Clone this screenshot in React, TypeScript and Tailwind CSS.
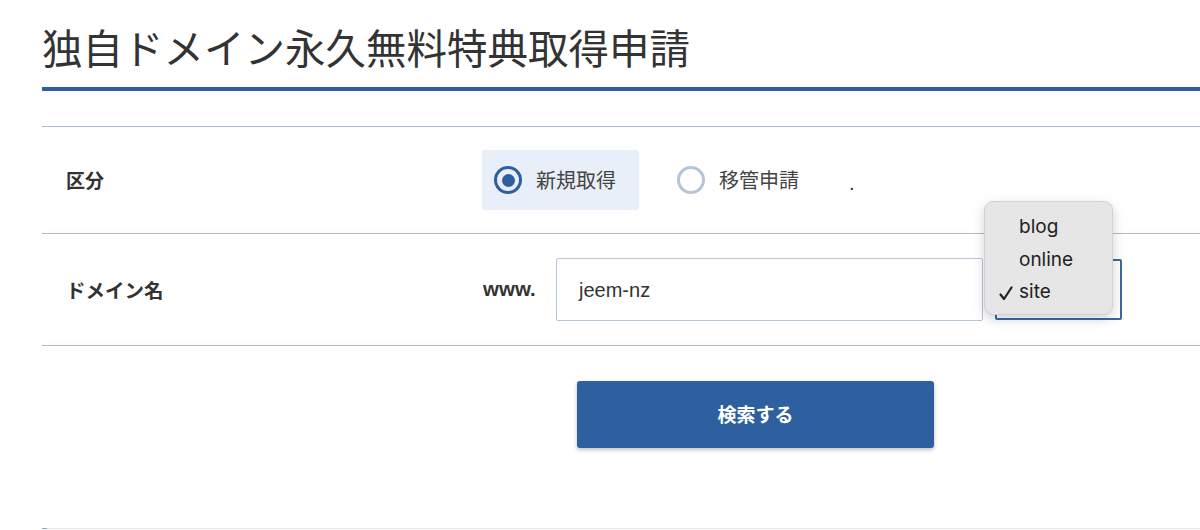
import { useState } from "react";

const jp = "font-['Noto_Sans_CJK_JP',sans-serif]";

const tlds = ["blog", "online", "site"];

function Radio({ checked, label }: { checked: boolean; label: string }) {
  return (
    <div
      className={`flex items-center h-[60px] pl-3 pr-[23px] rounded-[3px] ${
        checked ? "bg-[#e8eff8]" : ""
      }`}
    >
      <span
        className={`w-[28px] h-[28px] rounded-full border-[3px] flex items-center justify-center ${
          checked ? "border-[#2e5f9e]" : "border-[#b5c4d7]"
        }`}
      >
        {checked && <span className="w-[13px] h-[13px] rounded-full bg-[#2e5f9e]" />}
      </span>
      <span className={`ml-[14px] text-[20px] leading-[28px] text-[#444] ${jp}`}>{label}</span>
    </div>
  );
}

export default function App() {
  const [kind] = useState("new");
  const [tld] = useState("site");

  return (
    <div className="w-[1200px] h-[530px] overflow-hidden bg-white pl-[42px]">
      {/* heading */}
      <h1
        className={`pt-[23px] pb-[16px] text-[40.5px] leading-[48px] font-normal text-[#333] border-b-4 border-[#2e5f9e] ${jp}`}
      >
        独自ドメイン永久無料特典取得申請
      </h1>

      {/* form table */}
      <div className="mt-[35px] border-t border-[#a9bbd3]">
        {/* 区分 */}
        <div className="flex items-center h-[106px]">
          <div className={`w-[440px] pl-6 text-[19px] font-bold text-[#333] ${jp}`}>区分</div>
          <Radio checked={kind === "new"} label="新規取得" />
          <div className="ml-[26px]">
            <Radio checked={kind === "transfer"} label="移管申請" />
          </div>
          <span className="ml-[27px] mt-[6px] text-[20px] text-[#333] font-['Liberation_Sans',sans-serif]">
            .
          </span>
        </div>

        {/* ドメイン名 */}
        <div className="flex items-center h-[112px] border-t border-[#a9bbd3]">
          <div className={`w-[440px] pl-6 text-[19.5px] font-bold text-[#333] ${jp}`}>ドメイン名</div>
          <span className="w-[74px] pl-px text-[20.5px] font-bold text-[#333] font-['Liberation_Sans',sans-serif]">
            www.
          </span>
          <div className="w-[427px] h-[63px] border border-[#b7c5d8] rounded-[2px] flex items-center pl-[22px] text-[20px] text-[#333] font-['Liberation_Sans',sans-serif]">
            jeem-nz
          </div>
          <div className="relative ml-[12px] w-[127px] h-[61px] border-2 border-[#3b68a6] rounded-[2px]">
            {/* open select menu */}
            <div className="absolute left-[-13px] top-[-60px] w-[129px] h-[114px] rounded-[9px] bg-[#e6e6e6] border border-[#d2d2d2] shadow-[0_4px_12px_rgba(0,0,0,0.18)] pt-[10px] font-['Inter',sans-serif] text-[19px] text-[#222]">
              {tlds.map((t) => (
                <div key={t} className="relative h-[32.5px] leading-[30px] pl-[34px]">
                  {t === tld && (
                    <svg
                      className="absolute left-[14px] top-[9px]"
                      width="14"
                      height="15"
                      viewBox="0 0 14 15"
                      fill="none"
                    >
                      <path
                        d="M1.5 8.5 L5 13 L12.5 1.5"
                        stroke="#222"
                        strokeWidth="2.2"
                        strokeLinecap="round"
                        strokeLinejoin="round"
                      />
                    </svg>
                  )}
                  {t}
                </div>
              ))}
            </div>
          </div>
        </div>

        {/* submit */}
        <div className="border-t border-[#a9bbd3] pt-[35px]">
          <button
            className={`ml-[535px] w-[357px] h-[67px] bg-[#2e5f9e] rounded-[3px] shadow-[0_2px_4px_rgba(0,0,0,0.25)] text-white text-[19px] font-bold ${jp}`}
          >
            検索する
          </button>
        </div>
      </div>

      {/* next section edge */}
      <div className="mt-[80px] h-px bg-[#e8e8e8] flex">
        <div className="w-[5px] bg-[#8ea6c8]" />
      </div>
    </div>
  );
}
